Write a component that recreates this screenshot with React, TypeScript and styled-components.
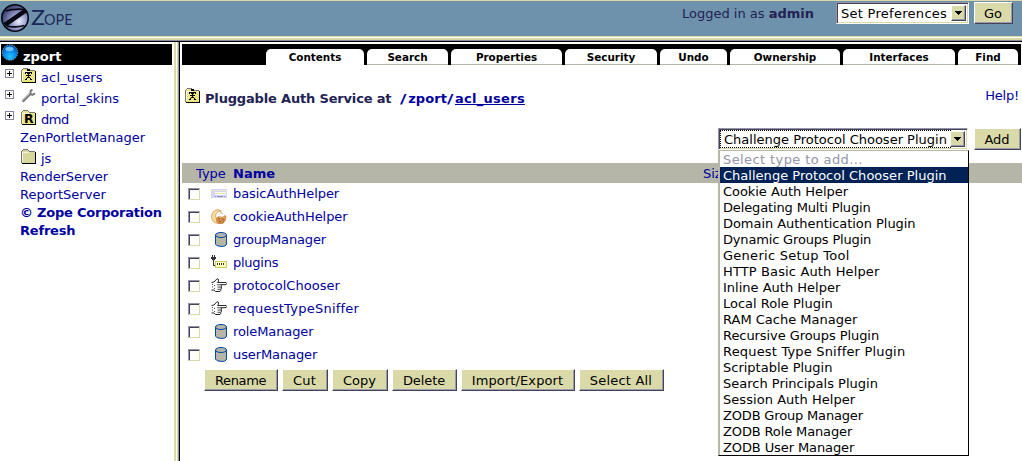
import React from "react";
import styled, { createGlobalStyle, css } from "styled-components";

const Global = createGlobalStyle`
  * { box-sizing: border-box; }
  body { margin: 0; background: #fff; font: 13px/18px "DejaVu Sans", Verdana, sans-serif; overflow: hidden; }
  #root { height: 461px; }
`;

const Page = styled.div`display: flex; flex-direction: column; width: 1022px; height: 461px; white-space: nowrap; overflow: hidden;`;
const Header = styled.header`
  display: flex; height: 37px; flex: none; background: #6e92ab; color: #222255;
  border-top: 1px solid #dadaa8; border-bottom: 1px solid #dadaa8;
`;
const Rule = styled.div`
  height: 7px; flex: none;
  background: linear-gradient(#fff 0 1px, #dadaa8 1px 3px, #8c8ca4 3px 4px, #000 4px 5px, #fff 5px);
`;
const Logo = styled.div`flex: 1; display: flex; padding: 2px 0 0 1px;`;
const LoginInfo = styled.div`padding: 3px 22px 0 0; line-height: 19px;`;
const HeaderTools = styled.div`display: flex; gap: 5px; padding: 1px 9px 0 0; align-items: flex-start;`;

const Button = styled.button<{ $w: number; $ls?: number }>`
  width: ${p => p.$w}px; height: 22px; padding: 0 1px 0 0; flex: none;
  font: inherit; line-height: 19px; letter-spacing: ${p => p.$ls ?? 0}px; color: #000;
  background: #dadaa8; border: 1px solid; border-color: #fff #444455 #444455 #fff;
  box-shadow: inset -1px -1px #9a9ab0; border-radius: 0;
`;

const SelectBox = styled.div<{ $w: number }>`
  position: relative; width: ${p => p.$w}px; height: 22px; display: flex; flex: none; background: #fff; color: #000;
  border: 1px solid; border-color: #9494ac #fff #fff #9494ac; box-shadow: inset 1px 1px #444455, inset -1px -1px #dadaa8;
  padding: 2px;
`;
const SelectText = styled.span<{ $focus?: boolean; $ls?: number }>`
  flex: 1; height: 16px; line-height: 17px; padding-left: 2px; letter-spacing: ${p => p.$ls ?? 0}px;
  ${p => p.$focus && css`padding-left: 3px; outline: 1px dotted #000; outline-offset: 0;`}
`;
const ArrowBox = styled.span`
  width: 15px; height: 16px; flex: none; display: flex; align-items: center; justify-content: center;
  background: #dadaa8; border: 1px solid; border-color: #fff #444455 #444455 #fff; box-shadow: inset -1px -1px #9a9ab0;
`;
const Arrow = () => (
  <ArrowBox><svg width="7" height="4" shapeRendering="crispEdges"><path d="M0 0h7v1h-1v1h-1v1h-1v1h-1v-1h-1v-1h-1v-1h-1z" /></svg></ArrowBox>
);

const Body = styled.div`display: flex; flex: 1; min-height: 0;`;
const Sidebar = styled.nav`width: 174px; flex: none; padding-left: 1px; color: #0000a0;`;
const FrameEdge = styled.div`
  width: 8px; flex: none; margin-top: -2px;
  background: linear-gradient(90deg, #dadaa8 0 2px, #fff 2px 3px, #dadaa8 3px 4px, #9494ac 4px 5px, #000 5px 6px, #fff 6px);
`;
const Root = styled.div`
  display: flex; height: 21px; width: 171px; background: #000; color: #fff; font-weight: bold; line-height: 25px;
  span { margin-left: 4px; }
`;
const TreeRow = styled.div<{ $icon?: boolean; $bold?: boolean; $ls?: number }>`
  display: flex; align-items: flex-end; height: ${p => (p.$icon ? 21 : 18)}px; line-height: 19px;
  font-weight: ${p => (p.$bold ? "bold" : "normal")}; letter-spacing: ${p => p.$ls ?? 0}px;
  > span:last-child { height: 18px; line-height: ${p => (p.$icon ? 20 : 19)}px; }
`;
const Toggle = styled.span`width: 19px; height: 100%; padding: 4px 0 0 4px; flex: none; svg { display: block; }`;
const TreeIcon = styled.span`width: 21px; height: 100%; padding: 3px 0 0 1px; flex: none; svg { display: block; }`;

const Main = styled.main`flex: 1; display: flex; flex-direction: column; color: #0000a0;`;
const Tabs = styled.div`display: flex; gap: 3px; height: 21px; width: 839px; background: #000; padding: 5px 0 0 84px; flex: none;`;
const Tab = styled.div<{ $w: number; $active?: boolean }>`
  width: ${p => p.$w}px; height: 16px; text-align: center; background: #fff; color: #000; border-radius: 5px 5px 0 0;
  font: bold 10.4px/17px "DejaVu Sans", sans-serif;
  border-bottom: 1px solid ${p => (p.$active ? "#fff" : "#b5b5a8")};
`;
const TitleRow = styled.div`display: flex; height: 62px; padding: 23px 3px 0 3px; svg { margin-right: 4px; }`;
const Title = styled.h1`
  margin: 2px 0 0; font-size: 13px; line-height: 18px; color: #222255; flex: 1; letter-spacing: -0.17px; white-space: pre;
`;
const Path = styled.span`color: #0000a0; letter-spacing: 0.1px;`;
const Slash = styled.span`display: inline-block; padding: 0 2px 0 1px; transform: scaleX(1.35);`;
const Current = styled.span`color: #0000a0; text-decoration: underline; text-decoration-skip-ink: none; text-underline-offset: 1px; letter-spacing: 0.28px;`;
const Help = styled.span`margin-top: -1px; letter-spacing: -0.2px;`;
const AddRow = styled.div`display: flex; height: 36px; justify-content: flex-end; gap: 6px; padding-top: 1px; margin-right: 1px;`;
const TableHead = styled.div`display: flex; height: 20px; line-height: 21px; background: #b5b5a8; padding-left: 14px;`;
const TypeHead = styled.span`width: 37px;`;
const NameHead = styled.b`width: 470px;`;
const SizeHead = styled.span``;
const Item = styled.div<{ $ls?: number }>`
  display: flex; align-items: center; height: 23px; padding-left: 6px; letter-spacing: ${p => p.$ls ?? 0}px;
`;
const Check = styled.span`
  width: 12px; height: 12px; background: #fff; border: 1px solid; border-color: #9494ac #dadaa8 #dadaa8 #9494ac;
  box-shadow: inset 1px 1px #444455; margin-bottom: 1px;
`;
const ItemIcon = styled.span`width: 33px; display: flex; justify-content: flex-end; padding-right: 6px; padding-bottom: 2px;`;
const ItemName = styled.span`padding-bottom: 2px;`;
const Actions = styled.div`display: flex; gap: 4px; padding: 2px 0 0 22px;`;
const Menu = styled.ul`
  position: absolute; left: -1px; top: 21px; width: 251px; height: 306px; margin: 0; padding: 0 0 0 1px; list-style: none;
  background: #fff; border: 1px solid; border-color: #b5b5a8 #000 #000 #b5b5a8; color: #000; z-index: 2;
  box-shadow: inset 1px 0 #b5b5a8;
`;
const Option = styled.li<{ $sel?: boolean; $off?: boolean; $ls?: number }>`
  height: 16px; line-height: 17px; padding-left: 3px; background: ${p => (p.$sel ? "#002255" : "transparent")};
  color: ${p => (p.$sel ? "#fff" : p.$off ? "#9494a8" : "#000")}; letter-spacing: ${p => p.$ls ?? 0}px;
`;

const ZopeLogo = () => (
  <svg width="76" height="32" viewBox="0 0 76 32">
    <defs><radialGradient id="orb" cx=".65" cy=".62" r=".65">
      <stop offset="0" stopColor="#eef0ff" /><stop offset=".45" stopColor="#949ccc" /><stop offset="1" stopColor="#3c4070" />
    </radialGradient></defs>
    <circle cx="14" cy="15" r="13.2" fill="url(#orb)" stroke="#080814" strokeWidth="1.6" />
    <path d="M4.5 8Q13 5.5 24 6.5M6 23Q15 25 23.5 22.5" fill="none" stroke="#080814" strokeWidth="1.7" />
    <path d="M2.5 20L23 6L27 8.5L5.5 23.5Z" fill="#080814" />
    <text x="30" y="22" fontFamily="Lato" fontSize="21" fill="#1c2858" textLength="14" lengthAdjust="spacingAndGlyphs">Z</text>
    <text x="43" y="22" fontFamily="Lato" fontSize="15.5" fill="#1c2858" textLength="28.5" lengthAdjust="spacingAndGlyphs">OPE</text>
  </svg>
);
const Globe = () => (
  <svg width="18" height="18" viewBox="0 0 18 18">
    <defs><radialGradient id="sea" cx=".5" cy=".75" r=".7"><stop offset="0" stopColor="#20c8ff" /><stop offset=".6" stopColor="#0880e4" /><stop offset="1" stopColor="#0050a8" /></radialGradient></defs>
    <circle cx="9" cy="8.5" r="7.7" fill="url(#sea)" stroke="#a8b8d0" strokeWidth=".8" strokeDasharray="1.5 1" />
    <ellipse cx="8.5" cy="5" rx="4" ry="2.2" fill="#70c0f8" />
  </svg>
);
const Plus = () => (
  <svg width="9" height="9" shapeRendering="crispEdges"><path d="M0 0h9v9h-9zM1 1v7h7v-7z" fillRule="evenodd" fill="#8484a0" /><path d="M4 2h1v2h2v1h-2v2h-1v-2h-2v-1h2z" /></svg>
);
const FolderIcon = ({ mark }: { mark?: "R" | "user" }) => {
  const weave = `weave-${mark ?? "plain"}`;
  return (
    <svg width="16" height="16" viewBox="0 0 16 16" shapeRendering="crispEdges">
      <defs><pattern id={weave} width="2" height="2" patternUnits="userSpaceOnUse"><path fill={mark ? "#f0ecb4" : "#d4d4b8"} d="M0 0h2v2H0z" /><path fill={mark ? "#e6de50" : "#dcd880"} d="M0 0h1v1H0zM1 1h1v1H1z" /></pattern></defs>
      <path d="M1 2h1v-1h5v1h1v1h6v11H1z" fill={`url(#${weave})`} />
      <path d="M2 0h5v1H2zM1 1h1v1H1zM0 2h1v12H0zM7 1h1v1H7zM8 2h6v1H8z" fill="#777" />
      <path d="M14 3h1v12H1v-1h13z" fill="#000" />
      <path d="M1 3h7v1H2v9H1z" fill="#fff" opacity=".7" />
      {mark === "R" && <text x="3" y="13" fontFamily="DejaVu Sans" fontWeight="bold" fontSize="12.5">R</text>}
      {mark === "user" && <path d="M6 1h3v2H6zM4 4h7v1H4zM4 5h1v1H4zM10 5h1v1h-1zM6 5h3v1H6zM5 7h5v1H5zM7 6h1v3H7zM6 9h3v1H6zM5 10h1v1H5zM9 10h1v1H9zM4 11h2v1H4zM9 11h2v1H9z" />}
    </svg>
  );
};
const Wrench = () => (
  <svg width="16" height="16" viewBox="0 1 16 16">
    <path d="M1.5 13.5L9.5 5.5" stroke="#777" strokeWidth="2.6" /><path d="M1.2 12.5L9 5" stroke="#d2d2cc" strokeWidth="1" />
    <path d="M11.4 1.4L9.6 3v2.8l1.6 1.2L14 5.4" fill="none" stroke="#707070" strokeWidth="1.8" />
  </svg>
);
const FormIcon = () => (
  <svg width="16" height="10" viewBox="0 0 16 10" shapeRendering="crispEdges"><path fill="#d4d4f8" d="M0 0h16v9H0z" /><path fill="#ececc4" d="M0 1h16v1H0z" /><path fill="#fff" d="M4 3h11v1H4zM4 5h11v1H4z" /><path fill="#e4e4b0" d="M4 4h11v1H4z" /><path fill="#8c94b8" d="M4 7h1v1H4zM6 7h6v1H6zM13 7h1v1h-1z" /></svg>
);
const CookieIcon = () => (
  <svg width="16" height="16" viewBox="0 0 16 16">
    <path d="M7 .6Q1 1.4 .6 7T5 14Q8 15 10 12Q4.6 11 4.6 7T9.5 2Z" fill="#f8dc98" stroke="#cc9c58" strokeWidth=".8" />
    <path d="M5 9l3-2 3 1 3-2 1.5 2-1 4-3 3H7l-2-3z" fill="#d08c48" /><path d="M7 9l2 1M11 10l2 1M8 12l2 1M12 13l1 0" stroke="#9c5c28" strokeWidth="1" /><path d="M8 8l2 0M12 8l2 1" stroke="#f4cc88" /><path d="M9.5 1l.6 3 1.4.6" fill="none" stroke="#cc9c58" strokeWidth=".9" />
  </svg>
);
const Cylinder = () => (
  <svg width="12" height="15" viewBox="0 0 12 15"><path d="M.5 3v9Q1 14.2 6 14.4T11.5 12V3" fill="#b5b5a8" stroke="#0048a8" /><ellipse cx="6" cy="3" rx="5.5" ry="2.5" fill="#b5b5a8" stroke="#0048a8" /></svg>
);
const PlugIcon = () => (
  <svg width="16" height="15" viewBox="0 0 16 15" shapeRendering="crispEdges">
    <path d="M1 0h1v2h1v-2h1v2h1v2h-1v1h-1v5h2v1h-3v-6h-1v-1h-1v-2h1z" fill="#333" />
    <path d="M4 6h12v7H4z" fill="#d0c860" /><path d="M5 7h10v5H5z" fill="#ffffb8" /><path d="M6 8h1v2H6zM8 8h1v2H8zM10 8h1v2h-1zM12 8h1v2h-1z" fill="#333" />
  </svg>
);
const Hand = () => (
  <svg width="16" height="15" viewBox="0 0 16 15">
    <path d="M.5 4.5L3 4l3-3.2 1.5.5v1.8L6.6 4.5H15l.6 1-.6 1.2H9.8l.8 1-.5 1.3.5 1-.8 1.3v1L9 13.5H4.5L3 12H.5" fill="#fff" stroke="#111" strokeWidth=".9" />
    <path d="M6 6.8h4M6.5 9.1H10M6.5 11.3h3M1.5 6v1M1.5 8.5v1M3.5 7v1M3.5 10v1" stroke="#222" strokeWidth=".8" />
  </svg>
);

const tabs: [string, number][] = [["Contents", 98], ["Search", 81], ["Properties", 111], ["Security", 92], ["Undo", 67], ["Ownership", 110], ["Interfaces", 112], ["Find", 60]];
const items: [string, React.ReactNode, number][] = [
  ["basicAuthHelper", <FormIcon />, -0.07], ["cookieAuthHelper", <CookieIcon />, -0.07], ["groupManager", <Cylinder />, -0.15], ["plugins", <PlugIcon />, -0.25],
  ["protocolChooser", <Hand />, 0.04], ["requestTypeSniffer", <Hand />, 0.24], ["roleManager", <Cylinder />, -0.1], ["userManager", <Cylinder />, -0.1],
];
const actions: [string, number, number][] = [["Rename", 74, -0.35], ["Cut", 46, 0.2], ["Copy", 56, 0], ["Delete", 65, -0.1], ["Import/Export", 114, 0.1], ["Select All", 85, 0.2]];
const options: [string, number][] = [
  ["Select type to add...", 0.4], ["Challenge Protocol Chooser Plugin", 0.02], ["Cookie Auth Helper", -0.05], ["Delegating Multi Plugin", -0.14],
  ["Domain Authentication Plugin", -0.05], ["Dynamic Groups Plugin", -0.17], ["Generic Setup Tool", 0.27], ["HTTP Basic Auth Helper", 0.13],
  ["Inline Auth Helper", 0], ["Local Role Plugin", 0], ["RAM Cache Manager", 0], ["Recursive Groups Plugin", -0.07],
  ["Request Type Sniffer Plugin", 0.18], ["Scriptable Plugin", 0], ["Search Principals Plugin", 0], ["Session Auth Helper", 0.05],
  ["ZODB Group Manager", -0.17], ["ZODB Role Manager", -0.13], ["ZODB User Manager", -0.1],
];
const tree: { name: string; icon?: React.ReactNode; open?: boolean; bold?: boolean; ls?: number }[] = [
  { name: "acl_users", icon: <FolderIcon mark="user" />, open: true, ls: 0.15 }, { name: "portal_skins", icon: <Wrench />, open: true, ls: 0.04 },
  { name: "dmd", icon: <FolderIcon mark="R" />, open: true, ls: -0.4 }, { name: "ZenPortletManager", ls: 0.03 }, { name: "js", icon: <FolderIcon /> },
  { name: "RenderServer", ls: -0.07 }, { name: "ReportServer" }, { name: "© Zope Corporation", bold: true, ls: -0.22 }, { name: "Refresh", bold: true, ls: -0.2 },
];

export default function App() {
  return (
    <Page>
      <Global />
      <Header>
        <Logo><ZopeLogo /></Logo>
        <LoginInfo>Logged in as <b>admin</b></LoginInfo>
        <HeaderTools>
          <SelectBox $w={133}><SelectText $ls={0.28}>Set Preferences</SelectText><Arrow /></SelectBox>
          <Button $w={39}>Go</Button>
        </HeaderTools>
      </Header>
      <Rule />
      <Body>
        <Sidebar>
          <Root><Globe /><span>zport</span></Root>
          {tree.map(t => (
            <TreeRow key={t.name} $icon={!!t.icon} $bold={t.bold} $ls={t.ls}>
              <Toggle>{t.open && <Plus />}</Toggle>
              {t.icon && <TreeIcon>{t.icon}</TreeIcon>}
              <span>{t.name}</span>
            </TreeRow>
          ))}
        </Sidebar>
        <FrameEdge />
        <Main>
          <Tabs>{tabs.map(([n, w], i) => <Tab key={n} $w={w} $active={i === 0}>{n}</Tab>)}</Tabs>
          <TitleRow>
            <FolderIcon mark="user" />
            <Title>Pluggable Auth Service at <Path> <Slash>/</Slash>zport<Slash>/</Slash></Path><Current>acl_users</Current></Title>
            <Help>Help!</Help>
          </TitleRow>
          <AddRow>
            <SelectBox $w={250}>
              <SelectText $focus>Challenge Protocol Chooser Plugin</SelectText><Arrow />
              <Menu>{options.map(([o, ls], i) => <Option key={o} $off={i === 0} $sel={i === 1} $ls={ls}>{o}</Option>)}</Menu>
            </SelectBox>
            <Button $w={47}>Add</Button>
          </AddRow>
          <TableHead><TypeHead>Type</TypeHead><NameHead>Name</NameHead><SizeHead>Size</SizeHead></TableHead>
          {items.map(([n, icon, ls]) => <Item key={n} $ls={ls}><Check /><ItemIcon>{icon}</ItemIcon><ItemName>{n}</ItemName></Item>)}
          <Actions>{actions.map(([n, w, ls]) => <Button key={n} $w={w} $ls={ls}>{n}</Button>)}</Actions>
        </Main>
      </Body>
    </Page>
  );
}
